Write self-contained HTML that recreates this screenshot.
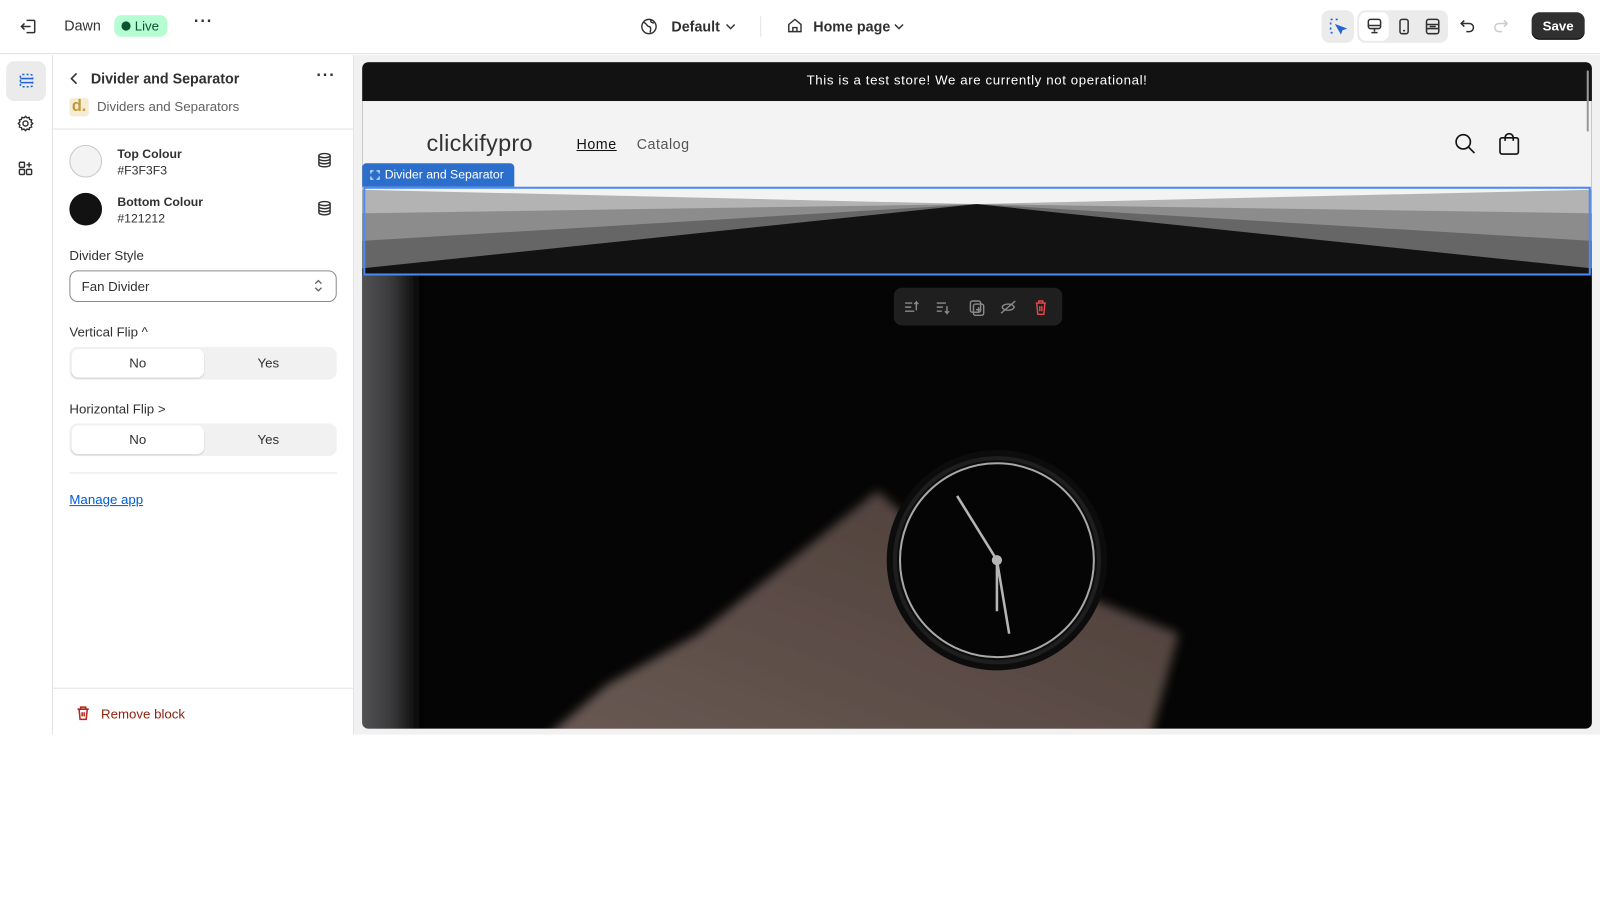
<!DOCTYPE html>
<html><head><meta charset="utf-8"><style>
*{box-sizing:border-box;margin:0;padding:0}
body{width:1600px;height:900px;background:#fff;font-family:"Liberation Sans",sans-serif;color:#303030;position:relative;overflow:hidden;font-size:13px}
#wrap{position:absolute;left:0;top:0;width:1568px;height:882px;transform:scale(1.0204);transform-origin:0 0}
.abs{position:absolute}
.top{left:0;top:0;width:1568px;height:53px;border-bottom:1px solid #e0e0e0;background:#fff}
.rail{left:0;top:54px;width:52px;height:666px;border-right:1px solid #e3e3e3;background:#fff}
.panel{left:52px;top:54px;width:295px;height:666px;border-right:1px solid #e3e3e3;background:#fff}
.canvas{left:347px;top:54px;width:1221px;height:666px;background:#f1f1f1}
.seg{position:absolute;left:68px;width:262px;height:32px;background:#f1f1f1;border-radius:8px}
.seg div{position:absolute;top:2px;height:28px;width:130px;text-align:center;line-height:28px;font-size:13px;color:#303030}
.seg .on{left:2px;background:#fff;border-radius:7px;box-shadow:0 1px 1px rgba(0,0,0,.1)}
.seg .off{left:130px}
</style></head><body><div id="wrap">
<div class="abs top">
  <svg class="abs" style="left:18px;top:16px" width="20" height="20" viewBox="0 0 20 20" fill="none" stroke="#303030" stroke-width="1.5"><path d="M8 4h7a1 1 0 0 1 1 1v10a1 1 0 0 1-1 1H8M3 10h9M6 7l-3 3 3 3"/></svg>
  <div class="abs" style="left:63px;top:17px;font-size:14px">Dawn</div>
  <div class="abs" style="left:112px;top:15px;width:52px;height:21px;background:#b4fed2;border-radius:7px;font-size:13px;line-height:21px;padding-left:20px;color:#0c5132">Live<span class="abs" style="left:7px;top:6px;width:9px;height:9px;border-radius:50%;background:#0c5132"></span></div>
  <div class="abs" style="left:190px;top:13px;font-size:16px;letter-spacing:1px;font-weight:bold">···</div>
  <svg class="abs" style="left:627px;top:17px" width="18" height="18" viewBox="0 0 18 18" fill="none" stroke="#303030" stroke-width="1.4"><circle cx="9" cy="9" r="7"/><path d="M4 5c3 1 3 4 5 4s2 3 1 6M11 2.5c-1 2 1 3 3 3"/></svg>
  <div class="abs" style="left:658px;top:18px;font-size:14px;font-weight:bold">Default</div>
  <svg class="abs" style="left:710px;top:21px" width="12" height="10" viewBox="0 0 12 10" fill="none" stroke="#303030" stroke-width="1.4"><path d="M2 3l4 4 4-4"/></svg>
  <div class="abs" style="left:745px;top:16px;width:1px;height:20px;background:#e3e3e3"></div>
  <svg class="abs" style="left:771px;top:17px" width="16" height="16" viewBox="0 0 16 16" fill="none" stroke="#303030" stroke-width="1.4"><path d="M2 7l6-5 6 5v7H2z M6 14v-4h4v4"/></svg>
  <div class="abs" style="left:797px;top:18px;font-size:14px;font-weight:bold">Home page</div>
  <svg class="abs" style="left:875px;top:21px" width="12" height="10" viewBox="0 0 12 10" fill="none" stroke="#303030" stroke-width="1.4"><path d="M2 3l4 4 4-4"/></svg>
  <div class="abs" style="left:1295px;top:10px;width:32px;height:32px;background:#ebebeb;border-radius:8px"></div>
  <svg class="abs" style="left:1302px;top:17px" width="18" height="18" viewBox="0 0 18 18" fill="none" stroke="#2463d6" stroke-width="1.6"><path d="M2 2h2M7 2h2M2 5v2M2 10v2M2 15h2" /><path d="M8 8l8 3-3 1-1 3z" fill="#2463d6"/></svg>
  <div class="abs" style="left:1330px;top:10px;width:89px;height:32px;background:#ebebeb;border-radius:8px"></div>
  <div class="abs" style="left:1332px;top:12px;width:29px;height:28px;background:#fff;border-radius:7px"></div>
  <svg class="abs" style="left:1338px;top:17px" width="18" height="18" viewBox="0 0 18 18" fill="none" stroke="#303030" stroke-width="1.5"><rect x="3" y="2" width="12" height="9" rx="2"/><path d="M3 8h12M9 11v3M6 15h6"/></svg>
  <svg class="abs" style="left:1367px;top:17px" width="18" height="18" viewBox="0 0 18 18" fill="none" stroke="#303030" stroke-width="1.5"><rect x="5" y="2" width="8" height="14" rx="2"/><path d="M8 13h2"/></svg>
  <svg class="abs" style="left:1395px;top:17px" width="18" height="18" viewBox="0 0 18 18" fill="none" stroke="#303030" stroke-width="1.5"><rect x="3" y="2" width="12" height="14" rx="2"/><path d="M3 7h12M3 11h12M6 9h6"/></svg>
  <svg class="abs" style="left:1430px;top:17px" width="18" height="18" viewBox="0 0 18 18" fill="none" stroke="#303030" stroke-width="1.5"><path d="M5 3L2 6l3 3M2 6h8a4 4 0 0 1 0 8H7"/></svg>
  <svg class="abs" style="left:1461px;top:17px" width="18" height="18" viewBox="0 0 18 18" fill="none" stroke="#cccccc" stroke-width="1.5"><path d="M13 3l3 3-3 3M16 6H8a4 4 0 0 0 0 8h3"/></svg>
  <div class="abs" style="left:1501px;top:12px;width:52px;height:27px;background:#303030;border-radius:8px;color:#fff;font-weight:bold;font-size:13px;text-align:center;line-height:27px;box-shadow:inset 0 -1px 0 #000">Save</div>
</div>

<div class="abs rail">
  <div class="abs" style="left:6px;top:6px;width:39px;height:39px;background:#ebebeb;border-radius:8px"></div>
  <svg class="abs" style="left:17px;top:16px" width="18" height="18" viewBox="0 0 18 18" fill="none" stroke="#2463d6" stroke-width="1.5"><rect x="3" y="3" width="12" height="12" rx="2" stroke-dasharray="2 2"/><path d="M3 7h12M3 11h12"/></svg>
  <svg class="abs" style="left:16px;top:58px" width="18" height="18" viewBox="0 0 18 18" fill="none" stroke="#303030" stroke-width="1.4"><circle cx="9" cy="9" r="2.5"/><path d="M9 2l1.5 1.5 2-.5.5 2 2 .5-.5 2L16 9l-1.5 1.5.5 2-2 .5-.5 2-2-.5L9 16l-1.5-1.5-2 .5-.5-2-2-.5.5-2L2 9l1.5-1.5-.5-2 2-.5.5-2 2 .5z"/></svg>
  <svg class="abs" style="left:16px;top:102px" width="18" height="18" viewBox="0 0 18 18" fill="none" stroke="#303030" stroke-width="1.4"><rect x="3" y="3" width="5" height="5" rx="1"/><rect x="3" y="10" width="5" height="5" rx="1"/><rect x="10" y="10" width="5" height="5" rx="1"/><path d="M12.5 3v5M10 5.5h5"/></svg>
</div>

<div class="abs panel">
  <svg class="abs" style="left:14px;top:16px" width="14" height="14" viewBox="0 0 14 14" fill="none" stroke="#303030" stroke-width="1.6"><path d="M9 2L4 7l5 5"/></svg>
  <div class="abs" style="left:37px;top:15px;font-size:14px;font-weight:bold">Divider and Separator</div>
  <div class="abs" style="left:258px;top:12px;font-size:16px;font-weight:bold;letter-spacing:1px">···</div>
  <div class="abs" style="left:16px;top:42px;width:19px;height:18px;background:#f5ecd4;border-radius:3px;color:#c39a3a;font-size:16px;font-weight:bold;text-align:center;line-height:17px">d.</div>
  <div class="abs" style="left:43px;top:43px;font-size:13px;color:#616161">Dividers and Separators</div>
  <div class="abs" style="left:0;top:72px;width:295px;height:1px;background:#e3e3e3"></div>
  <div class="abs" style="left:16px;top:88px;width:32px;height:32px;border-radius:50%;background:#f3f3f3;border:1px solid #c9c9c9"></div>
  <div class="abs" style="left:63px;top:90px;font-size:12px;font-weight:bold">Top Colour</div>
  <div class="abs" style="left:63px;top:106px;font-size:12px">#F3F3F3</div>
  <div class="abs" style="left:16px;top:135px;width:32px;height:32px;border-radius:50%;background:#121212"></div>
  <div class="abs" style="left:63px;top:137px;font-size:12px;font-weight:bold">Bottom Colour</div>
  <div class="abs" style="left:63px;top:153px;font-size:12px">#121212</div>
  <svg class="abs" style="left:259px;top:95px" width="14" height="16" viewBox="0 0 14 16" fill="none" stroke="#303030" stroke-width="1.4"><ellipse cx="7" cy="3.5" rx="5.5" ry="2"/><path d="M1.5 3.5v9c0 1.1 2.5 2 5.5 2s5.5-.9 5.5-2v-9M1.5 6.5c0 1.1 2.5 2 5.5 2s5.5-.9 5.5-2M1.5 9.5c0 1.1 2.5 2 5.5 2s5.5-.9 5.5-2"/></svg>
  <svg class="abs" style="left:259px;top:142px" width="14" height="16" viewBox="0 0 14 16" fill="none" stroke="#303030" stroke-width="1.4"><ellipse cx="7" cy="3.5" rx="5.5" ry="2"/><path d="M1.5 3.5v9c0 1.1 2.5 2 5.5 2s5.5-.9 5.5-2v-9M1.5 6.5c0 1.1 2.5 2 5.5 2s5.5-.9 5.5-2M1.5 9.5c0 1.1 2.5 2 5.5 2s5.5-.9 5.5-2"/></svg>
  <div class="abs" style="left:16px;top:189px;font-size:13px">Divider Style</div>
  <div class="abs" style="left:16px;top:211px;width:262px;height:31px;border:1px solid #8a8a8a;border-radius:8px;font-size:13px;line-height:29px;padding-left:11px">Fan Divider</div>
  <svg class="abs" style="left:254px;top:218px" width="12" height="16" viewBox="0 0 12 16" fill="none" stroke="#616161" stroke-width="1.3"><path d="M3 6l3-3 3 3M3 10l3 3 3-3"/></svg>
  <div class="abs" style="left:16px;top:264px;font-size:13px">Vertical Flip ^</div>
  <div class="abs" style="left:16px;top:339px;font-size:13px">Horizontal Flip &gt;</div>
  <div class="abs" style="left:16px;top:409px;width:262px;height:1px;background:#e3e3e3"></div>
  <div class="abs" style="left:16px;top:428px;font-size:13px;color:#005bd3;text-decoration:underline">Manage app</div>
  <div class="abs" style="left:0;top:620px;width:295px;height:1px;background:#e3e3e3"></div>
  <svg class="abs" style="left:22px;top:637px" width="15" height="16" viewBox="0 0 15 16" fill="none" stroke="#b42318" stroke-width="1.5"><path d="M2 4h11M5 4V2h5v2M3.5 4l1 10h6l1-10M6.5 7v4M8.5 7v4"/></svg>
  <div class="abs" style="left:47px;top:638px;font-size:13px;color:#8e1f0b">Remove block</div>
</div>
<div class="seg" style="top:340px"><div class="on">No</div><div class="off">Yes</div></div>
<div class="seg" style="top:415px"><div class="on">No</div><div class="off">Yes</div></div>

<div class="abs canvas">
  <div class="abs" style="left:8px;top:7px;width:1205px;height:653px;background:#121212;border-radius:6px;overflow:hidden">
    <div class="abs" style="left:0;top:0;width:1205px;height:38px;background:#121212;color:#fff;font-size:13px;text-align:center;line-height:36px;letter-spacing:.6px">This is a test store! We are currently not operational!</div>
    <div class="abs" style="left:0;top:38px;width:1205px;height:85px;background:#f3f3f3">
      <div class="abs" style="left:63px;top:28px;font-size:23px;color:#333;letter-spacing:.3px">clickifypro</div>
      <div class="abs" style="left:210px;top:34px;font-size:14px;color:#121212;text-decoration:underline;letter-spacing:.5px">Home</div>
      <div class="abs" style="left:269px;top:34px;font-size:14px;color:#555;letter-spacing:.5px">Catalog</div>
      <svg class="abs" style="left:1070px;top:31px" width="22" height="22" viewBox="0 0 22 22" fill="none" stroke="#121212" stroke-width="1.6"><circle cx="9" cy="9" r="7"/><path d="M14 14l6 6"/></svg>
      <svg class="abs" style="left:1112px;top:30px" width="24" height="24" viewBox="0 0 24 24" fill="none" stroke="#121212" stroke-width="1.6"><rect x="3" y="6" width="18" height="16" rx="2"/><path d="M8 9V6a4 4 0 0 1 8 0v3"/></svg>
    </div>
    <div class="abs" style="left:0;top:99px;width:149px;height:23px;background:#2c6ecb;border-radius:4px 4px 0 0;color:#fff;font-size:12px;line-height:23px;padding-left:22px">Divider and Separator<span class="abs" style="left:8px;top:7px;width:9px;height:9px;border:1px dashed #fff"></span></div>
    <div class="abs" style="left:0;top:123px;width:1205px;height:88px;background:#f3f3f3">
      <svg width="1205" height="88" viewBox="0 0 1205 88" preserveAspectRatio="none">
        <polygon points="0,2 602,16 1205,2 1205,88 0,88" fill="#b3b3b3"/>
        <polygon points="0,25 602,16 1205,25 1205,88 0,88" fill="#8c8c8c"/>
        <polygon points="0,52 602,16 1205,52 1205,88 0,88" fill="#666"/>
        <polygon points="0,79 602,16 1205,79 1205,88 0,88" fill="#121212"/>
      </svg>
    </div>
    <div class="abs" style="left:1px;top:122px;width:1203px;height:87px;border:2px solid #4a8af4"></div>
    <svg class="abs" style="left:0;top:209px" width="1205" height="444" viewBox="0 209 1205 444">
      <defs>
        <filter id="b" x="-20%" y="-20%" width="140%" height="140%"><feGaussianBlur stdDeviation="5"/></filter>
        <linearGradient id="ls" x1="0" x2="1"><stop offset="0" stop-color="#5a5a5c"/><stop offset="0.6" stop-color="#3a3a3c"/><stop offset="1" stop-color="#060606"/></linearGradient>
        <linearGradient id="sk" x1="0" y1="1" x2="1" y2="0"><stop offset="0" stop-color="#6a5a54"/><stop offset="1" stop-color="#4a3c37"/></linearGradient>
      </defs>
      <rect x="0" y="209" width="1205" height="444" fill="#050505"/>
      <rect x="-10" y="200" width="65" height="470" fill="url(#ls)" filter="url(#b)"/>
      <polygon points="505,420 560,470 700,520 800,560 770,670 170,670 240,610 330,560 430,480" fill="url(#sk)" filter="url(#b)"/>
      <circle cx="622" cy="488" r="108" fill="#0c0c0c"/>
      <circle cx="622" cy="488" r="95" fill="#050505" stroke="#a8a8a8" stroke-width="2"/>
      <circle cx="622" cy="488" r="100" fill="none" stroke="#1e1e1e" stroke-width="4"/>
      <path d="M622 488L583 425M622 488L634 560M622 488v50" stroke="#b5b5b5" stroke-width="2.5"/>
      <circle cx="622" cy="488" r="5" fill="#b5b5b5"/>
    </svg>
    <div class="abs" style="left:521px;top:221px;width:165px;height:37px;background:#1f1f1f;border-radius:8px"></div>
    <svg class="abs" style="left:531px;top:231px" width="150" height="18" viewBox="0 0 150 18" fill="none" stroke="#8a8a8a" stroke-width="1.4"><path d="M1 5h7M1 9h6M1 13h9M12 12V4l-2 2M12 4l2 2"/><path d="M32 5h9M32 9h6M32 13h5M42 8v7l-2-2M42 15l2-2"/><rect x="65" y="3" width="10" height="11" rx="2"/><rect x="68" y="6" width="10" height="11" rx="2"/><path d="M73 9v5M70.5 11.5h5"/><path d="M96 9c2-4 10-4 12 0-2 4-10 4-12 0M95 15l14-12"/><path d="M129 5h10M132 5V3h4v2M130 5l1 11h6l1-11M133 8v5M135 8v5" stroke="#e5484d"/></svg>
  </div>
  <div class="abs" style="left:1208px;top:15px;width:2px;height:60px;background:#999;border-radius:1px"></div>
</div>
</div></body></html>
